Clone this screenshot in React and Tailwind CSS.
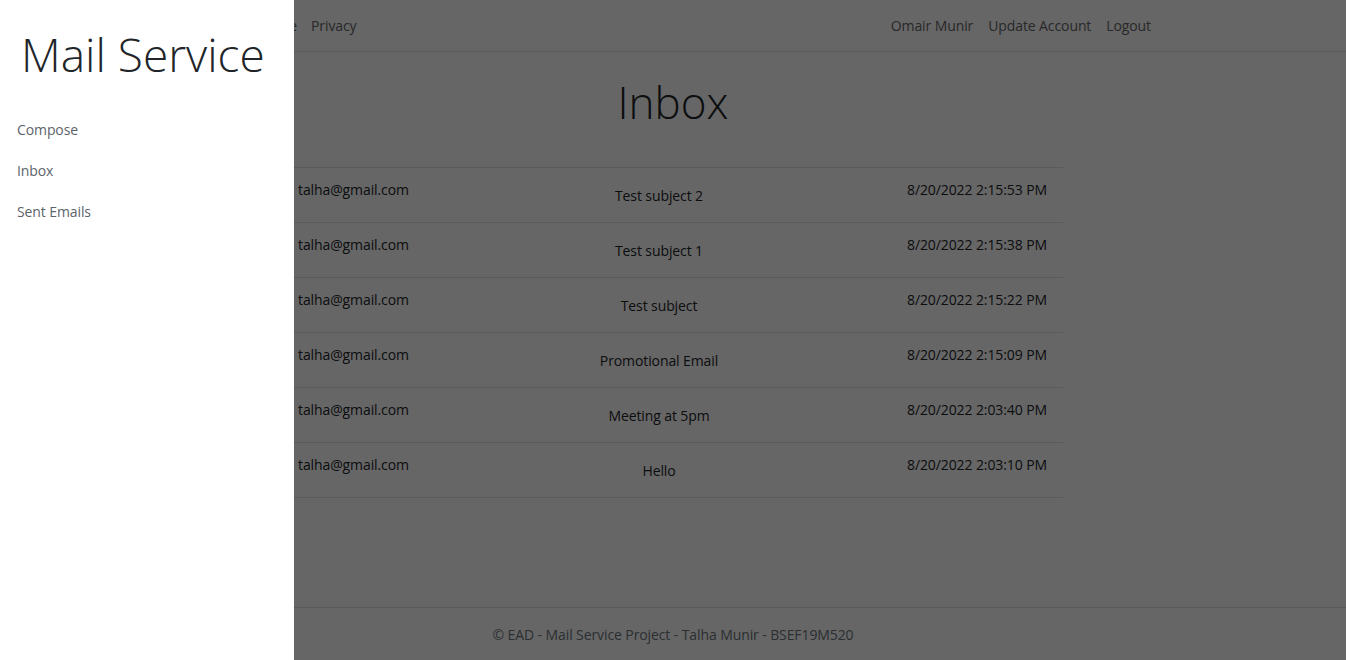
import React from "react"

const emails = [
  { from: "talha@gmail.com", subject: "Test subject 2", date: "8/20/2022 2:15:53 PM" },
  { from: "talha@gmail.com", subject: "Test subject 1", date: "8/20/2022 2:15:38 PM" },
  { from: "talha@gmail.com", subject: "Test subject", date: "8/20/2022 2:15:22 PM" },
  { from: "talha@gmail.com", subject: "Promotional Email", date: "8/20/2022 2:15:09 PM" },
  { from: "talha@gmail.com", subject: "Meeting at 5pm", date: "8/20/2022 2:03:40 PM" },
  { from: "talha@gmail.com", subject: "Hello", date: "8/20/2022 2:03:10 PM" },
]

export default function App() {
  return (
    <div className="relative w-[1346px] h-[660px] overflow-hidden bg-white font-['Open_Sans',sans-serif] text-[#212529]">
      {/* page under the drawer */}
      <div className="flex flex-col h-full">
        <nav className="h-[52px] border-b border-[#dee2e6] flex items-center text-[14px] tracking-[-0.1px] text-[#666]">
          <div className="w-[297px] flex justify-end items-center">
            <a>Home</a>
          </div>
          <a className="ml-[14px]">Privacy</a>
          <div className="ml-auto mr-[195px] flex gap-[15px]">
            <a>Omair Munir</a>
            <a>Update Account</a>
            <a>Logout</a>
          </div>
        </nav>

        <main className="flex-1">
          <h1 className="text-center font-light text-[44px] leading-none mt-[28px]">Inbox</h1>
          <div className="ml-[290px] w-[773px] mt-[43px] border-t border-[#dee2e6]">
            {emails.map((e, i) => (
              <div key={i} className="grid grid-cols-[250px_238px_1fr] h-[55px] border-b border-[#dee2e6] text-[14px] tracking-[-0.1px]">
                <div className="pl-2 pt-[11px]">{e.from}</div>
                <div className="text-center pt-[17px]">{e.subject}</div>
                <div className="text-right pr-4 pt-[11px]">{e.date}</div>
              </div>
            ))}
          </div>
        </main>

        <footer className="h-[53px] border-t border-[#dee2e6] flex items-center justify-center text-[14px] tracking-[-0.1px] text-[#6c757d]">
          © EAD - Mail Service Project - Talha Munir - BSEF19M520
        </footer>
      </div>

      {/* backdrop */}
      <div className="absolute inset-0 bg-black/60" />

      {/* offcanvas drawer */}
      <aside className="absolute left-0 top-0 h-full w-[294px] bg-white">
        <h2 className="font-light text-[46px] leading-none text-[#212529] ml-[21px] mt-[31px]">Mail Service</h2>
        <ul className="mt-[42px] text-[14px] tracking-[-0.1px] text-[#5c636a]">
          <li className="ml-[17px] h-[41px]">Compose</li>
          <li className="ml-[17px] h-[41px]">Inbox</li>
          <li className="ml-[17px] h-[41px]">Sent Emails</li>
        </ul>
      </aside>
    </div>
  )
}
